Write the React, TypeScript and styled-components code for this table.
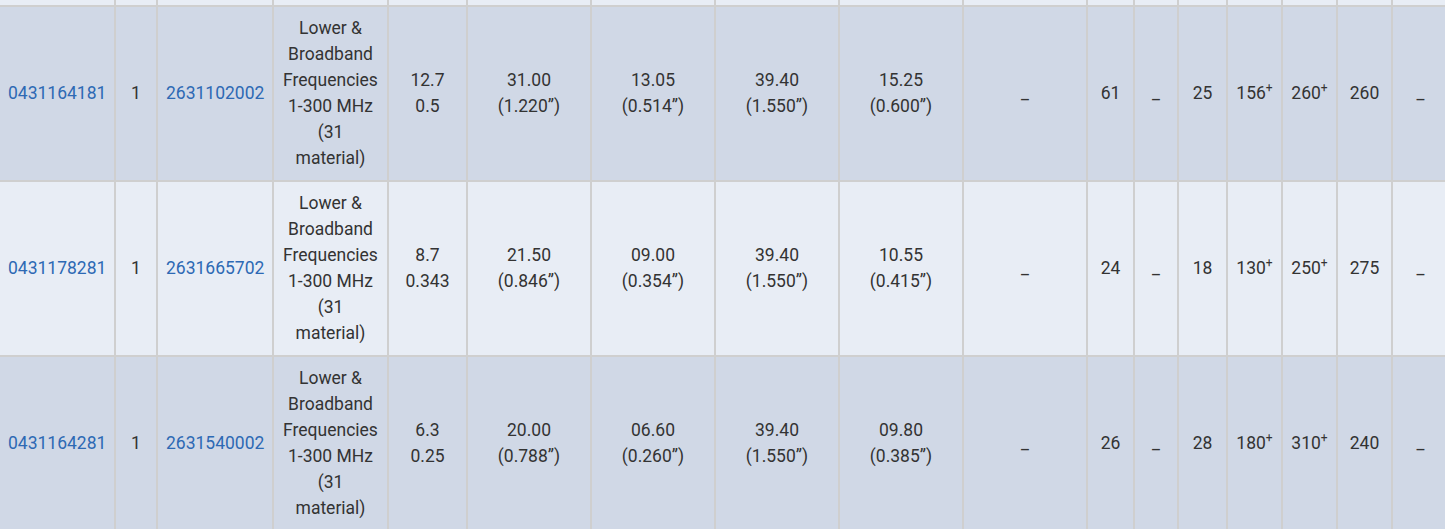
import React from "react";
import styled, { createGlobalStyle } from "styled-components";

const GlobalStyle = createGlobalStyle`
  html, body {
    margin: 0;
    padding: 0;
    overflow: hidden;
    background: #e8edf5;
  }
`;

const COLUMN_WIDTHS = [118, 42, 116, 115, 79, 124, 124, 124, 124, 124, 47, 44, 49, 55, 55, 55, 57];

interface IPart {
  part: string;
  qty: string;
  core: string;
  material: string;
  ratio: [string, string];
  dims: Array<[string, string]>;
  tail: string[];
}

const DESCRIPTION = "Lower & Broadband Frequencies 1-300 MHz (31 material)";

const parts: IPart[] = [
  {
    part: "0431164181",
    qty: "1",
    core: "2631102002",
    material: DESCRIPTION,
    ratio: ["12.7", "0.5"],
    dims: [
      ["31.00", "(1.220”)"],
      ["13.05", "(0.514”)"],
      ["39.40", "(1.550”)"],
      ["15.25", "(0.600”)"],
    ],
    tail: ["_", "61", "_", "25", "156+", "260+", "260", "_"],
  },
  {
    part: "0431178281",
    qty: "1",
    core: "2631665702",
    material: DESCRIPTION,
    ratio: ["8.7", "0.343"],
    dims: [
      ["21.50", "(0.846”)"],
      ["09.00", "(0.354”)"],
      ["39.40", "(1.550”)"],
      ["10.55", "(0.415”)"],
    ],
    tail: ["_", "24", "_", "18", "130+", "250+", "275", "_"],
  },
  {
    part: "0431164281",
    qty: "1",
    core: "2631540002",
    material: DESCRIPTION,
    ratio: ["6.3", "0.25"],
    dims: [
      ["20.00", "(0.788”)"],
      ["06.60", "(0.260”)"],
      ["39.40", "(1.550”)"],
      ["09.80", "(0.385”)"],
    ],
    tail: ["_", "26", "_", "28", "180+", "310+", "240", "_"],
  },
];

const Root = styled.div`
  width: 1445px;
  overflow: hidden;
  font-family: Roboto, "Liberation Sans", sans-serif;
`;

const Table = styled.table`
  width: 1452px;
  margin-left: -2px;
  table-layout: fixed;
  border-collapse: separate;
  border-spacing: 0;
  font-size: 17.5px;
  line-height: 26px;
  color: #333;
`;

const Row = styled.tr<{ $shade: boolean }>`
  background: ${p => (p.$shade ? "#d0d8e6" : "#e8edf5")};
`;

const Cell = styled.td`
  box-sizing: border-box;
  padding: 8px 8px 9px;
  text-align: center;
  vertical-align: middle;
  border-right: 2px solid #cfcfcf;
  border-bottom: 2px solid #cfcfcf;

  &:first-child {
    border-left: 2px solid #cfcfcf;
  }
`;

const SliverCell = styled(Cell)`
  height: 7px;
  padding: 0;
`;

const PartLink = styled.a`
  color: #2d69b4;
  text-decoration: none;
`;

const Stack = styled.div`
  display: flex;
  flex-direction: column;
  align-items: center;
`;

const Plus = styled.sup`
  font-size: 12px;
  line-height: 0;
  vertical-align: 7px;
`;

const Value = ({ text }: { text: string }) =>
  text.endsWith("+") ? (
    <>
      {text.slice(0, -1)}
      <Plus>+</Plus>
    </>
  ) : (
    <>{text}</>
  );

const renderRow = (item: IPart, index: number) => (
  <Row key={item.part} $shade={index % 2 === 0}>
    <Cell>
      <PartLink href="#">{item.part}</PartLink>
    </Cell>
    <Cell>{item.qty}</Cell>
    <Cell>
      <PartLink href="#">{item.core}</PartLink>
    </Cell>
    <Cell>{item.material}</Cell>
    <Cell>
      <Stack>
        <span>{item.ratio[0]}</span>
        <span>{item.ratio[1]}</span>
      </Stack>
    </Cell>
    {item.dims.map(([mm, inch], i) => (
      <Cell key={i}>
        <Stack>
          <span>{mm}</span>
          <span>{inch}</span>
        </Stack>
      </Cell>
    ))}
    {item.tail.map((text, i) => (
      <Cell key={`t${i}`}>
        <Value text={text} />
      </Cell>
    ))}
  </Row>
);

export default function App() {
  return (
    <Root>
      <GlobalStyle />
      <Table>
        <colgroup>
          {COLUMN_WIDTHS.map((w, i) => (
            <col key={i} style={{ width: w }} />
          ))}
        </colgroup>
        <tbody>
          <Row $shade={false}>
            {COLUMN_WIDTHS.map((_, i) => (
              <SliverCell key={i} />
            ))}
          </Row>
          {parts.map(renderRow)}
        </tbody>
      </Table>
    </Root>
  );
}
